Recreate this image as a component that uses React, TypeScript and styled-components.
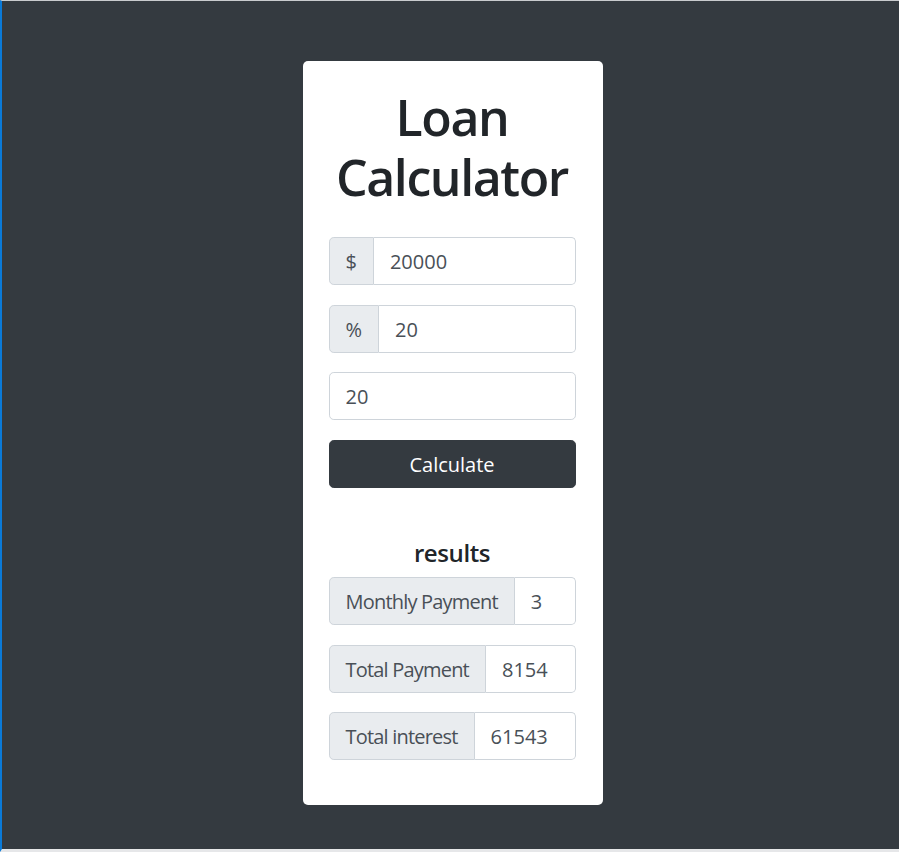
import React from "react";
import styled, { createGlobalStyle } from "styled-components";

const Global = createGlobalStyle`
  html, body { margin: 0; padding: 0; }
  body { font-family: "Segoe UI", "Open Sans", "Noto Sans", sans-serif; }
  * { box-sizing: border-box; }
`;

const Page = styled.div`
  min-height: 852px;
  background: #343a40;
  border-left: 2px solid #0a7ad8;
  border-top: 1px solid #c9cbce;
  border-bottom: 3px solid #e6e7e9;
  display: flex;
  justify-content: center;
  align-items: flex-start;
  padding: 60px 0 0 4px;
`;

const Card = styled.div`
  width: 300px;
  background: #fff;
  border-radius: 5px;
  padding: 26px 27px 45px 26px;
  display: flex;
  flex-direction: column;
`;

const Title = styled.h1`
  margin: 0 0 30px;
  font-size: 50px;
  line-height: 60px;
  font-weight: 600;
  color: #212529;
  text-align: center;
  letter-spacing: -1.4px;
`;

const Group = styled.div<{ $gap?: number }>`
  display: flex;
  height: 48px;
  margin-bottom: ${(p) => (p.$gap ?? 20)}px;
`;

const Addon = styled.span<{ $tight?: boolean }>`
  display: flex;
  align-items: center;
  padding: 0 16px;
  background: #e9ecef;
  border: 1px solid #ced4da;
  border-radius: 4.8px 0 0 4.8px;
  color: #495057;
  font-size: 20px;
  letter-spacing: ${(p) => (p.$tight ? "-0.8px" : "0")};
  white-space: nowrap;
`;

const Field = styled.input<{ $alone?: boolean }>`
  flex: 1 1 auto;
  width: 1%;
  min-width: 0;
  height: 48px;
  padding: 0 16px;
  border: 1px solid #ced4da;
  border-left-width: ${(p) => (p.$alone ? "1px" : "0")};
  border-radius: ${(p) => (p.$alone ? "4.8px" : "0 4.8px 4.8px 0")};
  color: #495057;
  font-size: 20px;
  font-family: inherit;
  background: #fff;
  outline: none;
`;

const Button = styled.button`
  height: 48px;
  width: 100%;
  border: 1px solid #343a40;
  background: #343a40;
  color: #fff;
  font-size: 20px;
  font-family: inherit;
  border-radius: 4.8px;
  margin-bottom: 50px;
`;

const Results = styled.h4`
  margin: 0 0 10px;
  font-size: 24px;
  line-height: 29px;
  font-weight: 600;
  color: #212529;
  text-align: center;
  letter-spacing: -0.4px;
`;

export default function App() {
  return (
    <>
      <Global />
      <Page>
        <Card>
          <Title>Loan Calculator</Title>
          <Group>
            <Addon>$</Addon>
            <Field defaultValue="20000" />
          </Group>
          <Group $gap={19}>
            <Addon>%</Addon>
            <Field defaultValue="20" />
          </Group>
          <Group>
            <Field $alone defaultValue="20" />
          </Group>
          <Button>Calculate</Button>
          <Results>results</Results>
          <Group>
            <Addon $tight>Monthly Payment</Addon>
            <Field readOnly defaultValue="3" />
          </Group>
          <Group $gap={19}>
            <Addon $tight>Total Payment</Addon>
            <Field readOnly defaultValue="8154" />
          </Group>
          <Group $gap={0}>
            <Addon $tight>Total interest</Addon>
            <Field readOnly defaultValue="61543" />
          </Group>
        </Card>
      </Page>
    </>
  );
}
